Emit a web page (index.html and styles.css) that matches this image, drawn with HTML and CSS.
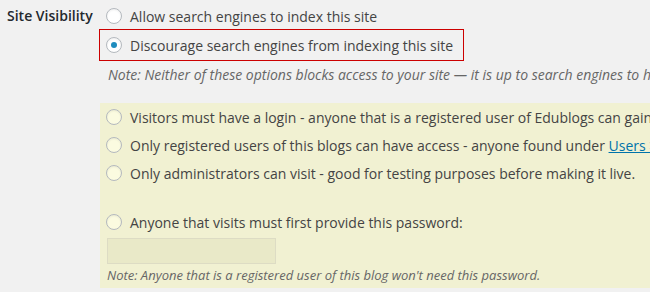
FILE: index.html
```html
<!DOCTYPE html>
<html>
<head>
<meta charset="utf-8">
<link rel="stylesheet" href="styles.css">
</head>
<body>
<div class="setting">
  <div class="label">Site Visibility</div>
  <div class="field">
    <label class="opt opt-first"><span class="radio"></span><span>Allow search engines to index this site</span></label>
    <label class="opt opt-boxed"><span class="radio checked"></span><span>Discourage search engines from indexing this site</span></label>
    <p class="note note-top">Note: Neither of these options blocks access to your site — it is up to search engines to honor this request.</p>
    <div class="privacy">
      <label class="opt"><span class="radio tinted"></span><span>Visitors must have a login - anyone that is a registered user of Edublogs can gain access.</span></label>
      <label class="opt"><span class="radio tinted"></span><span>Only registered users of this blogs can have access - anyone found under <a href="#">Users &gt; All Users</a>.</span></label>
      <label class="opt"><span class="radio tinted"></span><span>Only administrators can visit - good for testing purposes before making it live.</span></label>
      <label class="opt opt-password"><span class="radio tinted"></span><span>Anyone that visits must first provide this password:</span></label>
      <div class="pw-input"></div>
      <p class="note note-pw">Note: Anyone that is a registered user of this blog won't need this password.</p>
    </div>
  </div>
</div>
</body>
</html>
```
FILE: styles.css
```css
html, body {
  margin: 0;
  padding: 0;
  background: #f1f1f1;
  overflow: hidden;
}
body {
  width: 650px;
  height: 292px;
  font-family: "Open Sans", "Liberation Sans", sans-serif;
  font-size: 14px;
  color: #444;
}
.setting {
  display: flex;
  white-space: nowrap;
}
.label {
  width: 93px;
  padding-left: 7px;
  padding-top: 5px;
  font-weight: 600;
  color: #23282d;
  line-height: 22px;
  flex-shrink: 0;
}
.field {
  flex: 1;
  min-width: 0;
}
.opt {
  display: flex;
  align-items: center;
  height: 28px;
}
.opt-first {
  margin-top: 2px;
  padding-left: 6px;
}
.opt-boxed {
  display: inline-flex;
  box-sizing: border-box;
  height: 32px;
  margin-top: -1px;
  margin-left: -1px;
  padding-left: 6px;
  padding-right: 10px;
  border: 1px solid #c00;
}
.radio {
  box-sizing: border-box;
  width: 16px;
  height: 16px;
  border: 1px solid #b4b9be;
  border-radius: 50%;
  background: #fff;
  box-shadow: inset 0 1px 2px rgba(0,0,0,0.07);
  margin-right: 8px;
  flex-shrink: 0;
  position: relative;
}
.radio.checked::after {
  content: "";
  position: absolute;
  left: 4px;
  top: 4px;
  width: 6px;
  height: 6px;
  border-radius: 50%;
  background: #1e8cbe;
}
.radio.tinted {
  background: #fbfbe0;
}
.note {
  margin: 0;
  font-style: italic;
  color: #666;
}
.note-top {
  margin-top: 4px;
  padding-left: 8px;
  line-height: 20px;
  font-size: 14px;
}
.privacy {
  margin-top: 18px;
  background: #f1f1d2;
  padding: 0 0 4px 6px;
}
.opt-password {
  margin-top: 21px;
}
.pw-input {
  box-sizing: border-box;
  width: 169px;
  height: 26px;
  margin: 2px 0 0 1px;
  border: 1px solid #dddcc4;
  background: #e9e9c8;
}
.note-pw {
  margin-top: 2px;
  padding-left: 1px;
  line-height: 18px;
  font-size: 13px;
}
a {
  color: #0073aa;
  text-decoration: underline;
}
```
